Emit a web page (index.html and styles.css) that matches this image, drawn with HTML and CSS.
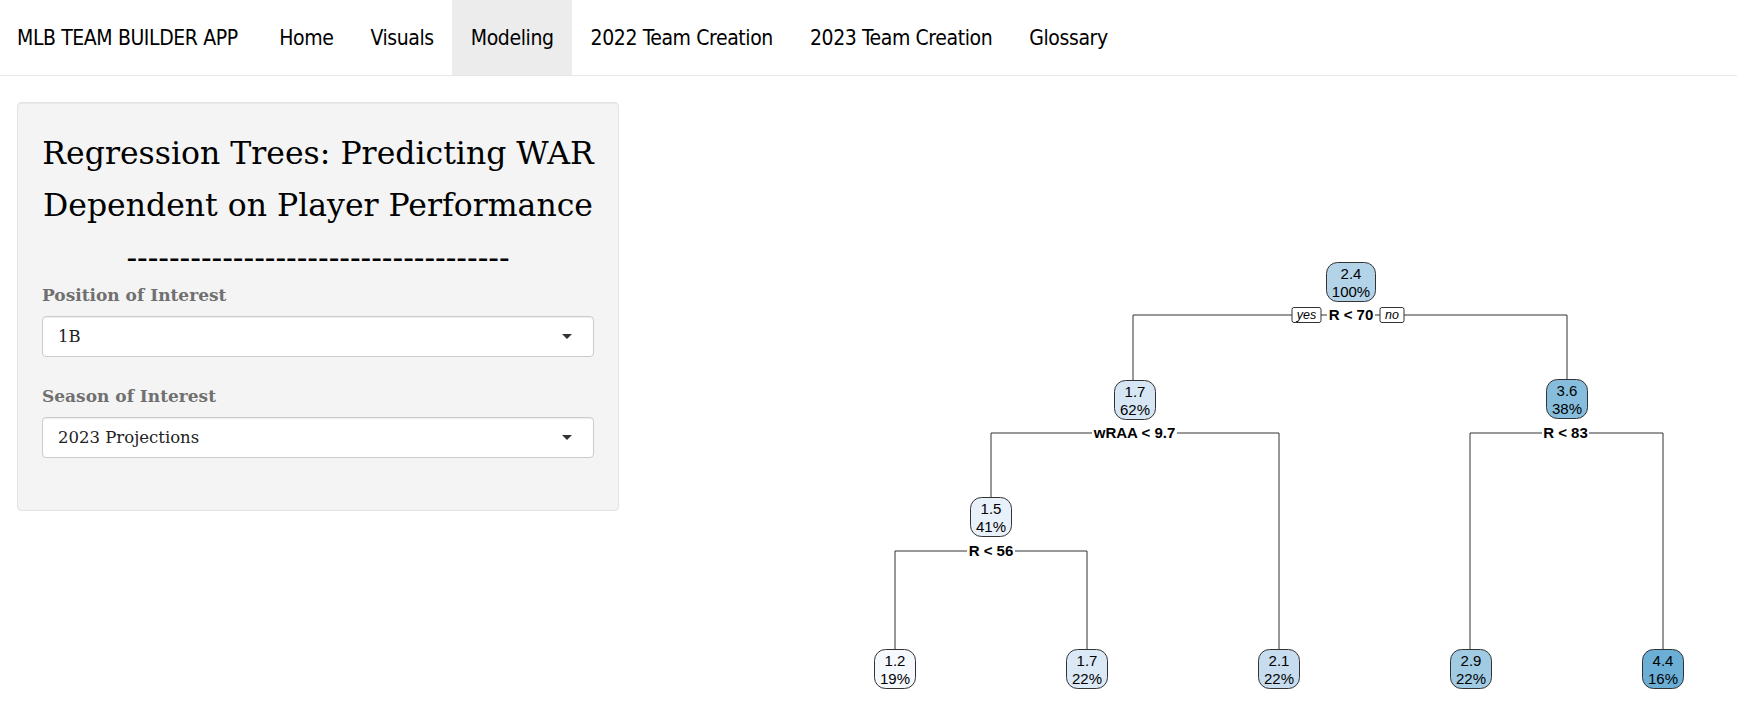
FILE: index.html
```html
<!DOCTYPE html>
<html>
<head>
<meta charset="utf-8">
<title>MLB Team Builder App</title>
<link rel="stylesheet" href="styles.css">
</head>
<body>
<nav class="navbar">
  <span class="brand">MLB TEAM BUILDER APP</span>
  <ul class="nav">
    <li class="nav-item">Home</li>
    <li class="nav-item">Visuals</li>
    <li class="nav-item active">Modeling</li>
    <li class="nav-item">2022 Team Creation</li>
    <li class="nav-item">2023 Team Creation</li>
    <li class="nav-item">Glossary</li>
  </ul>
</nav>
<div class="container">
  <aside class="well">
    <h2 class="title">Regression Trees: Predicting WAR<br>Dependent on Player Performance<br>------------------------------------</h2>
    <div class="form-group">
      <label class="control-label">Position of Interest</label>
      <div class="select"><span>1B</span><span class="caret"></span></div>
    </div>
    <div class="form-group last">
      <label class="control-label">Season of Interest</label>
      <div class="select"><span>2023 Projections</span><span class="caret"></span></div>
    </div>
  </aside>
  <main class="plot">
    <svg class="tree" width="1087" height="610" viewBox="633 102 1087 610" xmlns="http://www.w3.org/2000/svg">
      <g class="edges">
        <path d="M1132 380 V315 H1566 V379"/>
        <path d="M990 497 V433 H1278 V649"/>
        <path d="M1469 649 V433 H1662 V649"/>
        <path d="M894 649 V551 H1086 V649"/>
      </g>
      <g class="splits">
        <rect class="bg" x="1326" y="306" width="48" height="18"/>
        <text x="1350" y="320">R &lt; 70</text>
        <rect class="bg" x="1091" y="424" width="85" height="18"/>
        <text x="1133.5" y="438">wRAA &lt; 9.7</text>
        <rect class="bg" x="1541" y="424" width="47" height="18"/>
        <text x="1564.5" y="438">R &lt; 83</text>
        <rect class="bg" x="966" y="542" width="48" height="18"/>
        <text x="990" y="556">R &lt; 56</text>
      </g>
      <g class="yesno">
        <rect x="1291" y="307.5" width="29" height="15" rx="2"/>
        <text x="1305.5" y="319">yes</text>
        <rect x="1379" y="307.5" width="24" height="15" rx="2"/>
        <text x="1391" y="319">no</text>
      </g>
      <g class="nodes">
        <rect x="1325.5" y="262.5" width="49" height="39" rx="11" fill="#b3d3e9"/>
        <text x="1350" y="279">2.4</text><text x="1350" y="297">100%</text>

        <rect x="1113.5" y="380.5" width="41" height="39" rx="11" fill="#d6e6f4"/>
        <text x="1134" y="397">1.7</text><text x="1134" y="415">62%</text>

        <rect x="1545.5" y="379.5" width="41" height="39" rx="11" fill="#86bddc"/>
        <text x="1566" y="396">3.6</text><text x="1566" y="414">38%</text>

        <rect x="969.5" y="497.5" width="41" height="39" rx="11" fill="#e8f0f9"/>
        <text x="990" y="514">1.5</text><text x="990" y="532">41%</text>

        <rect x="873.5" y="649.5" width="41" height="39" rx="11" fill="#f5f9fe"/>
        <text x="894" y="666">1.2</text><text x="894" y="684">19%</text>

        <rect x="1065.5" y="649.5" width="41" height="39" rx="11" fill="#dbe8f5"/>
        <text x="1086" y="666">1.7</text><text x="1086" y="684">22%</text>

        <rect x="1257.5" y="649.5" width="41" height="39" rx="11" fill="#c7dcef"/>
        <text x="1278" y="666">2.1</text><text x="1278" y="684">22%</text>

        <rect x="1449.5" y="649.5" width="41" height="39" rx="11" fill="#a0cbe2"/>
        <text x="1470" y="666">2.9</text><text x="1470" y="684">22%</text>

        <rect x="1641.5" y="649.5" width="41" height="39" rx="11" fill="#6baed6"/>
        <text x="1662" y="666">4.4</text><text x="1662" y="684">16%</text>
      </g>
    </svg>
  </main>
</div>
</body>
</html>
```
FILE: styles.css
```css
html, body {
  margin: 0;
  padding: 0;
  background: #fff;
}
body {
  font-family: "DejaVu Serif", Georgia, serif;
  color: #000;
}
.navbar {
  height: 75px;
  border-bottom: 1px solid #e7e7e7;
  display: flex;
  align-items: stretch;
  font-family: "Liberation Sans Narrow", "DejaVu Sans Condensed", "DejaVu Sans", sans-serif;
  font-stretch: condensed;
  font-size: 21px;
  letter-spacing: -0.4px;
  color: #000;
}
.brand {
  display: flex;
  align-items: center;
  padding: 0 23px 0 17px;
}
.nav {
  list-style: none;
  margin: 0;
  padding: 0;
  display: flex;
}
.nav-item {
  display: flex;
  align-items: center;
  padding: 0 18.5px;
}
.nav-item.active {
  background: #ececec;
}
.container {
  display: flex;
  align-items: flex-start;
  padding: 26px 17px 0 17px;
  gap: 15px;
}
.well {
  box-sizing: border-box;
  width: 602px;
  flex: none;
  background: #f4f4f4;
  border: 1px solid #e3e3e3;
  border-radius: 4px;
  box-shadow: inset 0 1px 1px rgba(0,0,0,.05);
  padding: 19px 24px 34px 24px;
}
.title {
  margin: 5px 0 0 0;
  font-weight: normal;
  font-size: 31.5px;
  line-height: 52px;
  text-align: center;
  white-space: nowrap;
}
.form-group {
  margin-bottom: 28px;
}
.form-group.last {
  margin-bottom: 18px;
}
.control-label {
  display: block;
  font-weight: bold;
  font-size: 17px;
  line-height: 22px;
  color: #707070;
  margin: 1px 0 10px 0;
}
.select {
  box-sizing: border-box;
  height: 41px;
  background: #fff;
  border: 1px solid #ccc;
  border-radius: 4px;
  box-shadow: inset 0 1px 1px rgba(0,0,0,.075);
  display: flex;
  align-items: center;
  justify-content: space-between;
  padding: 0 21px 0 15px;
  font-size: 16.5px;
  color: #222;
}
.caret {
  width: 0;
  height: 0;
  border-left: 5px solid transparent;
  border-right: 5px solid transparent;
  border-top: 5px solid #333;
}
.plot {
  flex: 1;
}
.tree {
  display: block;
}
.edges path {
  fill: none;
  stroke: #333;
  stroke-width: 1;
}
.splits .bg {
  fill: #fff;
}
.splits text {
  font-family: "Liberation Sans", Arial, sans-serif;
  font-weight: bold;
  font-size: 15px;
  text-anchor: middle;
  fill: #000;
}
.yesno rect {
  fill: #fff;
  stroke: #333;
  stroke-width: 1;
}
.yesno text {
  font-family: "Liberation Sans", Arial, sans-serif;
  font-style: italic;
  font-size: 12.5px;
  text-anchor: middle;
  fill: #000;
}
.nodes rect {
  stroke: #333;
  stroke-width: 1;
}
.nodes text {
  font-family: "Liberation Sans", Arial, sans-serif;
  font-size: 15px;
  text-anchor: middle;
  fill: #000;
}
```
